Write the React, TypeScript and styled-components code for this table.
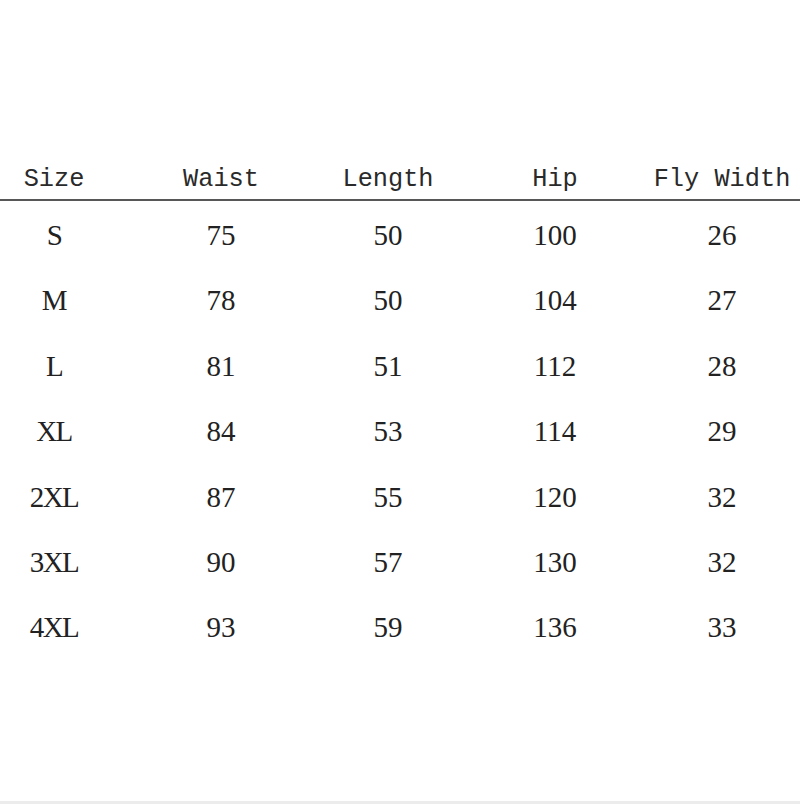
import * as React from "react";
import styled, { createGlobalStyle } from "styled-components";

const GlobalStyle = createGlobalStyle`
  html, body {
    margin: 0;
    padding: 0;
    background: #fff;
  }
`;

const Page = styled.div`
  box-sizing: border-box;
  height: 804px;
  padding-top: 161px;
  background: #fff;
  border-bottom: 3px solid #ececec;
  overflow: hidden;
`;

const Row = styled.div<{ $header?: boolean }>`
  display: grid;
  grid-template-columns: repeat(5, 108px);
  column-gap: 59px;
  height: ${(p) => (p.$header ? "38px" : "65.4px")};
  border-bottom: ${(p) => (p.$header ? "2px solid #575757" : "none")};
  margin-bottom: ${(p) => (p.$header ? "2px" : "0")};
  font-family: ${(p) =>
    p.$header
      ? '"Liberation Mono", "DejaVu Sans Mono", monospace'
      : '"Liberation Serif", "Times New Roman", serif'};
  font-size: ${(p) => (p.$header ? "25.3px" : "29px")};
  line-height: ${(p) => (p.$header ? "38px" : "65.4px")};
  color: ${(p) => (p.$header ? "#2a2a2a" : "#222")};
`;

const Cell = styled.div`
  display: flex;
  justify-content: center;
  white-space: nowrap;
`;

const Tight = styled.span`
  letter-spacing: -1.5px;
`;

const headers = ["Size", "Waist", "Length", "Hip", "Fly Width"];

const rows: (string | number)[][] = [
  ["S", 75, 50, 100, 26],
  ["M", 78, 50, 104, 27],
  ["L", 81, 51, 112, 28],
  ["XL", 84, 53, 114, 29],
  ["2XL", 87, 55, 120, 32],
  ["3XL", 90, 57, 130, 32],
  ["4XL", 93, 59, 136, 33],
];

export default function App() {
  return (
    <>
      <GlobalStyle />
      <Page>
        <Row $header>
          {headers.map((h) => (
            <Cell key={h}>{h}</Cell>
          ))}
        </Row>
        {rows.map((r) => (
          <Row key={r[0]}>
            {r.map((v, i) => (
              <Cell key={i}>{i === 0 ? <Tight>{v}</Tight> : v}</Cell>
            ))}
          </Row>
        ))}
      </Page>
    </>
  );
}
